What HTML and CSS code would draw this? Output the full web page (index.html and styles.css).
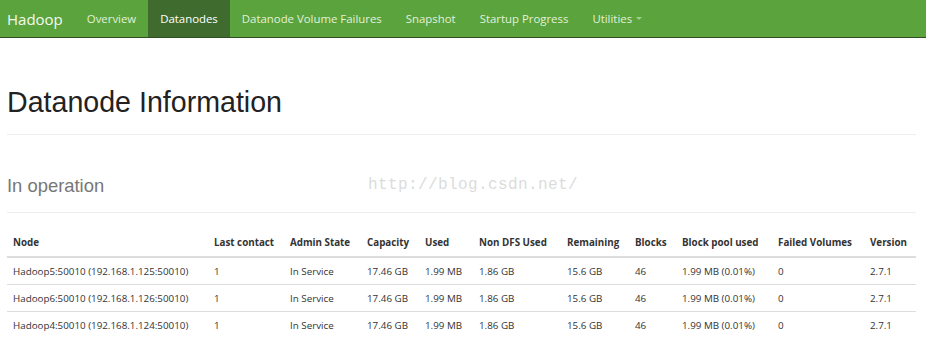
FILE: index.html
```html
<!DOCTYPE html>
<html lang="en">

<head>
  <meta charset="UTF-8">
  <title>Datanode Information</title>
  <link rel="stylesheet" href="styles.css">
</head>

<body>

  <nav class="navbar">
    <a class="brand" href="#">Hadoop</a>
    <ul class="nav">
      <li><a href="#">Overview</a></li>
      <li class="active"><a href="#">Datanodes</a></li>
      <li><a href="#">Datanode Volume Failures</a></li>
      <li><a href="#">Snapshot</a></li>
      <li><a href="#">Startup Progress</a></li>
      <li><a href="#">Utilities <span class="caret"></span></a></li>
    </ul>
  </nav>

  <div class="container">
    <div class="page-header">
      <h1>Datanode Information</h1>
    </div>

    <div class="section-header">
      <h2>In operation</h2>
      <span class="watermark">http://blog.csdn.net/</span>
    </div>

    <table class="table">
      <colgroup>
        <col style="width:201px">
        <col style="width:76px">
        <col style="width:77px">
        <col style="width:58px">
        <col style="width:54px">
        <col style="width:88px">
        <col style="width:68px">
        <col style="width:47px">
        <col style="width:96px">
        <col style="width:92px">
        <col style="width:52px">
      </colgroup>
      <thead>
        <tr>
          <th>Node</th>
          <th>Last contact</th>
          <th>Admin State</th>
          <th>Capacity</th>
          <th>Used</th>
          <th>Non DFS Used</th>
          <th>Remaining</th>
          <th>Blocks</th>
          <th>Block pool used</th>
          <th>Failed Volumes</th>
          <th>Version</th>
        </tr>
      </thead>
      <tbody>
        <tr>
          <td>Hadoop5:50010 (192.168.1.125:50010)</td>
          <td>1</td>
          <td>In Service</td>
          <td>17.46 GB</td>
          <td>1.99 MB</td>
          <td>1.86 GB</td>
          <td>15.6 GB</td>
          <td>46</td>
          <td>1.99 MB (0.01%)</td>
          <td>0</td>
          <td>2.7.1</td>
        </tr>
        <tr>
          <td>Hadoop6:50010 (192.168.1.126:50010)</td>
          <td>1</td>
          <td>In Service</td>
          <td>17.46 GB</td>
          <td>1.99 MB</td>
          <td>1.86 GB</td>
          <td>15.6 GB</td>
          <td>46</td>
          <td>1.99 MB (0.01%)</td>
          <td>0</td>
          <td>2.7.1</td>
        </tr>
        <tr>
          <td>Hadoop4:50010 (192.168.1.124:50010)</td>
          <td>1</td>
          <td>In Service</td>
          <td>17.46 GB</td>
          <td>1.99 MB</td>
          <td>1.86 GB</td>
          <td>15.6 GB</td>
          <td>46</td>
          <td>1.99 MB (0.01%)</td>
          <td>0</td>
          <td>2.7.1</td>
        </tr>
      </tbody>
    </table>
  </div>

</body>

</html>
```

FILE: styles.css
```css
body {
  margin: 0;
  padding: 0;
  background-color: #fff;
  color: #333;
  font-family: "Open Sans", "Noto Sans", sans-serif;
  font-size: 9.8px;
}

/* top navigation bar */
.navbar {
  display: flex;
  align-items: stretch;
  height: 37px;
  background-color: #5ba33d;
  border-bottom: 1px solid #2f4f22;
  padding-left: 7px;
}

.brand {
  display: flex;
  align-items: center;
  color: #f4faf0;
  font-size: 15px;
  text-decoration: none;
  margin-right: 12px;
}

.nav {
  display: flex;
  list-style: none;
  margin: 0;
  padding: 0;
}

.nav li a {
  display: flex;
  align-items: center;
  height: 100%;
  padding: 0 12px;
  color: #e2f1da;
  font-size: 11.4px;
  text-decoration: none;
}

.nav li.active a {
  background-color: #3f6c2e;
  color: #fff;
}

.caret {
  display: inline-block;
  margin-left: 4px;
  border-top: 3px solid #9fd088;
  border-left: 3px solid transparent;
  border-right: 3px solid transparent;
}

.container {
  padding: 0 10px 0 7px;
}

/* headings */
.page-header {
  padding-top: 48px;
  padding-bottom: 16px;
  border-bottom: 1px solid #eee;
}

.page-header h1 {
  margin: 0;
  font-family: "Liberation Sans", Arial, sans-serif;
  font-weight: normal;
  font-size: 28.6px;
  color: #222;
  line-height: 32px;
}

.section-header {
  position: relative;
  padding-top: 40px;
  padding-bottom: 15px;
  border-bottom: 1px solid #eee;
}

.section-header h2 {
  margin: 0;
  font-family: "Liberation Sans", Arial, sans-serif;
  font-weight: normal;
  font-size: 18.4px;
  color: #777;
  line-height: 22px;
}

.watermark {
  position: absolute;
  left: 361px;
  top: 41px;
  font-family: "Liberation Mono", monospace;
  font-size: 16px;
  color: #dcdcdc;
  letter-spacing: 0.4px;
}

/* data table */
.table {
  width: 909px;
  margin-top: 16px;
  border-collapse: collapse;
  table-layout: fixed;
}

.table th,
.table td {
  text-align: left;
  padding: 0 6px;
  white-space: nowrap;
}

.table th {
  font-weight: bold;
  height: 27px;
  vertical-align: middle;
  border-bottom: 2px solid #ddd;
}

.table td {
  height: 26px;
  border-top: 1px solid #ddd;
}
```
